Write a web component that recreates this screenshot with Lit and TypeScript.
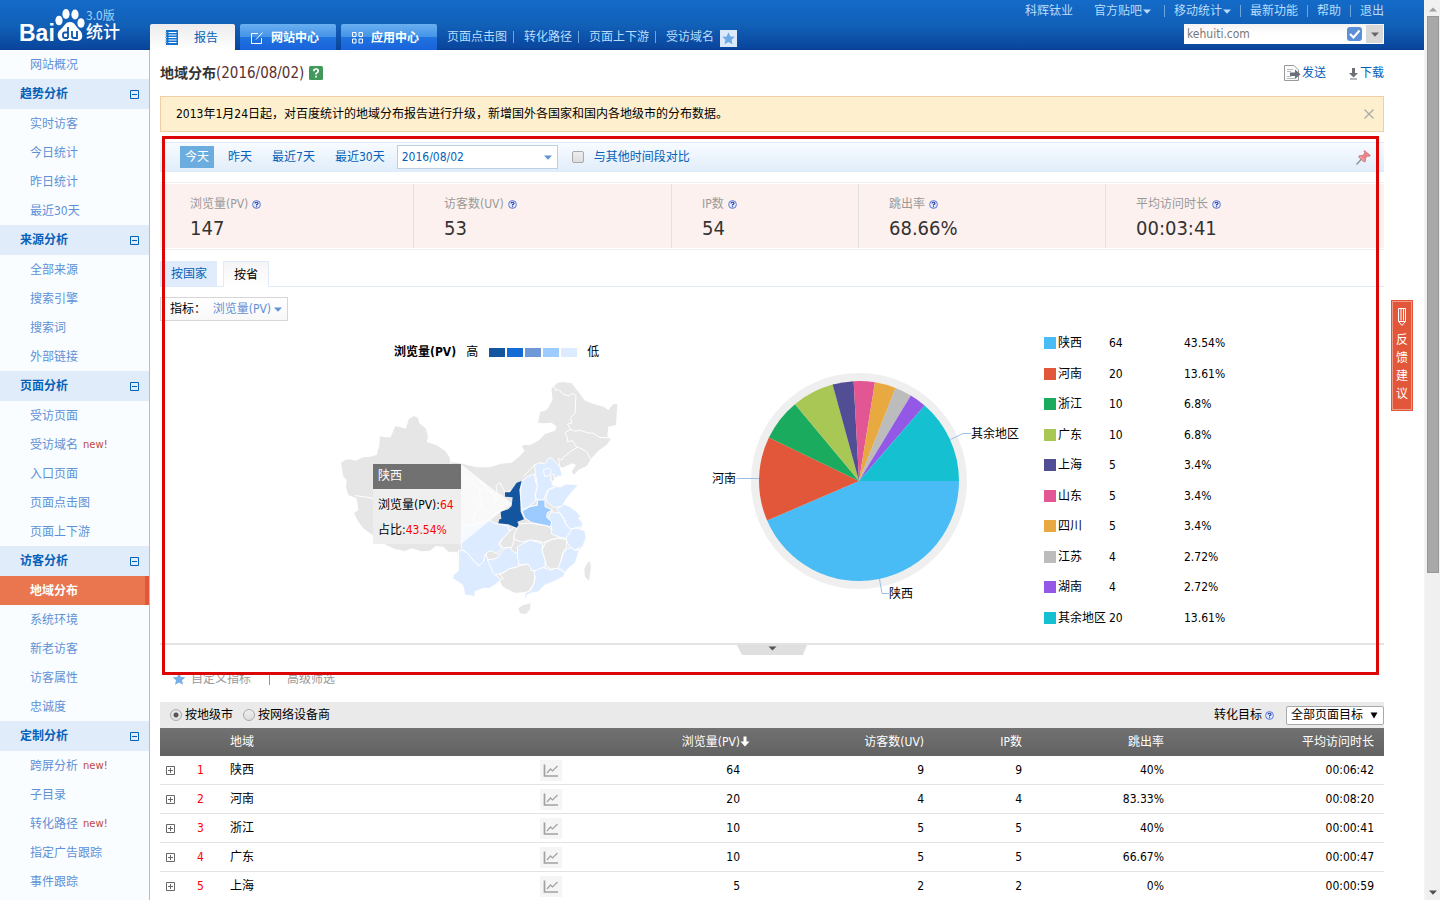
import { LitElement, html, svg, css } from "lit";
import { customElement, property } from "lit/decorators.js";

interface Group { title: string; items: { text: string; fresh?: boolean; active?: boolean }[]; }
interface Slice { name: string; value: number; share: string; color: string; }

const groups: Group[] = [
  { title: "趋势分析", items: [{ text: "实时访客" }, { text: "今日统计" }, { text: "昨日统计" }, { text: "最近30天" }] },
  { title: "来源分析", items: [{ text: "全部来源" }, { text: "搜索引擎" }, { text: "搜索词" }, { text: "外部链接" }] },
  { title: "页面分析", items: [{ text: "受访页面" }, { text: "受访域名", fresh: true }, { text: "入口页面" }, { text: "页面点击图" }, { text: "页面上下游" }] },
  { title: "访客分析", items: [{ text: "地域分布", active: true }, { text: "系统环境" }, { text: "新老访客" }, { text: "访客属性" }, { text: "忠诚度" }] },
  { title: "定制分析", items: [{ text: "跨屏分析", fresh: true }, { text: "子目录" }, { text: "转化路径", fresh: true }, { text: "指定广告跟踪" }, { text: "事件跟踪" }] },
];

const slices: Slice[] = [
  { name: "陕西", value: 64, share: "43.54%", color: "#49bcf5" },
  { name: "河南", value: 20, share: "13.61%", color: "#e25639" },
  { name: "浙江", value: 10, share: "6.8%", color: "#1bab5f" },
  { name: "广东", value: 10, share: "6.8%", color: "#a8c755" },
  { name: "上海", value: 5, share: "3.4%", color: "#524e95" },
  { name: "山东", value: 5, share: "3.4%", color: "#e35694" },
  { name: "四川", value: 5, share: "3.4%", color: "#e9a941" },
  { name: "江苏", value: 4, share: "2.72%", color: "#bcbcbc" },
  { name: "湖南", value: 4, share: "2.72%", color: "#9458e6" },
  { name: "其余地区", value: 20, share: "13.61%", color: "#15c1d1" },
];

const stats = [
  ["浏览量(PV)", "147"], ["访客数(UV)", "53"], ["IP数", "54"], ["跳出率", "68.66%"], ["平均访问时长", "00:03:41"],
];

const rows = [
  ["陕西", "64", "9", "9", "40%", "00:06:42"],
  ["河南", "20", "4", "4", "83.33%", "00:08:20"],
  ["浙江", "10", "5", "5", "40%", "00:00:41"],
  ["广东", "10", "5", "5", "66.67%", "00:00:47"],
  ["上海", "5", "2", "2", "0%", "00:00:59"],
];

const land = "33,398 45,390 60,388 75,392 100,382 120,380 140,375 148,345 150,318 165,322 182,322 196,288 212,292 228,296 236,268 252,258 264,264 268,280 288,296 294,320 290,336 320,346 345,362 358,380 362,398 375,397 400,402 440,412 480,412 510,402 545,398 570,378 584,362 576,350 580,344 600,346 628,330 645,312 675,302 680,290 665,278 640,280 624,278 630,247 650,240 668,210 664,178 672,168 684,158 700,156 725,160 745,185 765,212 790,222 820,230 835,240 850,222 862,222 858,285 835,290 832,318 842,328 830,345 805,362 785,385 770,408 745,420 732,434 725,425 738,405 728,400 715,405 700,412 690,412 697,437 680,440 672,450 665,462 672,468 695,470 705,462 745,464 722,490 708,508 700,522 720,530 740,545 752,560 745,565 756,575 758,590 748,597 765,603 768,625 758,650 748,660 742,680 735,700 715,715 705,728 700,740 670,755 645,765 625,785 600,790 585,788 555,790 530,778 515,768 508,755 495,765 480,775 460,775 435,785 435,800 420,797 405,795 398,765 368,745 370,735 385,722 386,690 382,665 355,665 340,650 318,648 300,662 275,664 245,655 225,663 195,657 168,645 140,625 100,595 85,575 72,550 85,540 80,505 55,495 48,470 50,450 40,440 36,418";

const pale = [
  "388,600 410,585 440,585 475,568 495,580 535,588 538,605 512,632 505,643 516,655 500,672 485,662 470,667 465,690 456,703 446,706 430,690 412,670 395,655",
  "386,660 400,662 415,672 430,692 446,708 460,696 466,672 475,690 484,706 488,725 512,750 480,775 460,775 435,785 435,800 420,797 405,795 398,765 368,745 370,735 385,722",
  "472,690 500,685 512,668 525,655 538,652 550,665 565,672 568,700 560,712 540,715 515,730 495,735 488,725 480,706",
  "563,650 580,640 600,630 622,636 638,642 636,662 645,690 645,712 628,722 605,722 595,702 568,705 562,680",
  "612,728 622,718 640,712 660,720 680,715 692,720 705,728 700,740 670,755 645,765 625,785 600,790 588,798 591,811 583,802 586,788 602,782 612,760 616,742",
  "712,655 728,652 735,662 748,658 742,680 735,700 715,715 705,728 685,712 692,695 700,670",
  "720,598 735,594 748,597 765,603 768,625 758,650 735,660 720,650 708,630 710,615",
  "665,545 690,550 702,570 712,590 725,598 708,625 690,622 665,612 665,590 652,568",
  "680,538 700,522 720,530 740,545 752,560 745,565 756,575 758,590 735,594 720,597 708,582 704,568 690,548",
  "655,480 680,470 695,470 705,462 745,464 722,490 708,508 695,530 670,532 650,515 648,500",
  "613,405 630,398 645,402 655,385 664,383 675,395 690,412 697,437 680,440 672,450 665,462 672,470 655,478 645,498 640,512 620,508 615,495 622,470 618,440",
  "575,455 592,440 612,432 616,450 622,470 615,495 618,510 600,528 576,540 574,520 570,500",
];
const grey = [
  "510,735 540,715 568,708 598,700 608,715 615,728 612,760 595,785 585,788 555,790 530,778 515,768 508,752 520,745",
  "645,640 660,630 690,624 710,630 710,650 698,668 692,695 685,715 665,718 650,710 645,690 636,662",
  "548,600 560,592 568,582 585,580 605,580 655,588 670,605 692,622 660,630 640,638 622,632 600,630 575,636 553,628",
  "510,640 520,622 538,605 550,592 562,594 552,615 552,632 545,652 518,654",
];
const borders = [
  "672,168 678,182 684,178 700,192 715,198 728,190 738,197 735,250 722,262 725,280 712,282 722,298",
  "722,298 735,304 750,300 770,308 790,310 808,322 842,324",
  "722,298 705,308 712,322 712,335 728,332 738,350 745,352 758,358 770,365 782,388",
  "742,352 725,362 700,382 696,390 685,385 690,412",
  "75,497 100,500 130,505 200,530 280,530 340,490 362,398",
  "390,430 410,440 430,462 450,478 448,500 456,525 440,545 430,560 435,580 450,576",
  "440,455 465,462 470,480 490,490 500,510 488,520 520,530",
  "575,455 545,480 525,488 520,478 510,458 498,468 502,490 520,500 545,522 512,545",
  "613,405 580,440",
  "480,565 500,548 512,545",
];

@customElement("help-dot")
export class HelpDot extends LitElement {
  static styles = css`:host { display: inline-flex; } svg { width: 9px; height: 9px; display: block; }`;
  render() {
    return html`<svg viewBox="0 0 9 9" aria-hidden="true"><circle cx="4.5" cy="4.5" r="3.9" fill="#e4ebfb" stroke="#5c79d8"/><path d="M3 3.6 Q3 2.2 4.5 2.2 Q6 2.2 6 3.5 Q6 4.2 4.5 4.8 V5.4 M4.5 6.2 V7.2" fill="none" stroke="#26399f" stroke-width="1.1"/></svg>`;
  }
}

@customElement("share-pie")
export class SharePie extends LitElement {
  @property({ attribute: false }) data: Slice[] = [];
  static styles = css`
    :host { display: block; }
    svg { display: block; width: 340px; height: 300px; }
    text { font: 12px "DejaVu Sans Condensed", "Noto Sans CJK SC", sans-serif; fill: #000; }
  `;
  render() {
    const total = this.data.reduce((sum, d) => sum + d.value, 0);
    const cx = 159, cy = 151, r = 100;
    let angle = 0;
    const wedges = this.data.map((d) => {
      const from = angle;
      angle += (d.value / total) * Math.PI * 2;
      const p = (a: number) => `${(cx + r * Math.cos(a)).toFixed(2)} ${(cy + r * Math.sin(a)).toFixed(2)}`;
      return svg`<path fill=${d.color} d=${`M${cx} ${cy} L${p(from)} A${r} ${r} 0 0 1 ${p(angle)} Z`}></path>`;
    });
    return html`<svg viewBox="0 0 340 300" role="img" aria-label="浏览量占比">
      <circle cx=${cx} cy=${cy} r="108" fill="#efefef"></circle>
      ${wedges}
      <g fill="none" stroke="#9cbfe6">
        <path d="M250.500 109.500 L263 103.500 H271"></path>
        <path d="M36.500 148.500 H59"></path>
        <path d="M179.500 249 L182 263.500 H189"></path>
      </g>
      <text x="271" y="108">其余地区</text>
      <text x="12" y="153">河南</text>
      <text x="189" y="268">陕西</text>
    </svg>`;
  }
}

@customElement("china-map")
export class ChinaMap extends LitElement {
  static styles = css`
    :host { display: block; position: relative; width: 320px; }
    .scale { display: flex; align-items: center; height: 20px; margin-top: 21px; padding-left: 64px; color: #000; }
    .scale b { margin-right: 10px; }
    .swatches { display: flex; gap: 2px; margin: 0 10px 0 11px; }
    .sw { width: 16px; height: 9px; }
    .c1 { background: #1455a0; } .c2 { background: #136bd6; } .c3 { background: #6e98d7; } .c4 { background: #9ecbff; } .c5 { background: #dcebff; }
    svg { display: block; width: 320px; height: 268px; }
    .tip { position: absolute; left: 43px; top: 143px; width: 88px; background: #eeeeee; color: #000; line-height: 25px; }
    .tip h4 { margin: 0; padding: 0 5px; font-weight: 400; font-size: 12px; color: #fff; background: #717171; }
    .tip p { margin: 0; padding: 0 5px; white-space: nowrap; }
    .tip div { padding: 4px 0 1px; }
    em { font-style: normal; color: #f00; }
  `;
  render() {
    return html`
      <div class="scale"><b>浏览量(PV)</b><span>高</span>
        <span class="swatches"><i class="sw c1"></i><i class="sw c2"></i><i class="sw c3"></i><i class="sw c4"></i><i class="sw c5"></i></span><span>低</span></div>
      <svg viewBox="0 96 960 804" role="img" aria-label="中国地图" stroke="#fff" stroke-width="3" stroke-linejoin="round">
        <polygon fill="#e6e6e6" stroke="none" points=${land}></polygon>
        ${borders.map((p) => svg`<polyline fill="none" points=${p}></polyline>`)}
        ${grey.map((p) => svg`<polygon fill="#e6e6e6" points=${p}></polygon>`)}
        ${pale.map((p) => svg`<polygon fill="#dcebff" points=${p}></polygon>`)}
        <polygon fill="#9ecbff" points="576,543 600,530 622,526 622,510 645,510 645,530 668,540 652,548 650,562 665,575 662,590 640,585 605,578 585,565"></polygon>
        <polygon fill="#dcebff" points="640,420 655,414 665,422 658,436 644,440"></polygon>
        <polygon fill="#e6e6e6" points="662,436 672,432 674,450 664,456"></polygon>
        <polygon fill="#1455a0" stroke="none" points="575,453 568,480 570,500 572,545 582,568 562,575 566,585 560,593 535,583 505,580 508,568 514,567 512,545 535,538 545,528 548,502 525,500 525,487 540,487 560,458"></polygon>
        <polygon fill="#e6e6e6" stroke="none" points="780,693 783,712 777,752 765,740 763,718 770,702"></polygon>
        <polygon fill="#e6e6e6" stroke="none" points="565,835 580,825 602,820 600,838 588,852 570,850"></polygon>
        <polygon fill="#fff" fill-opacity="0.75" stroke="none" points="393,402 543,521 393,642"></polygon>
      </svg>
      <div class="tip"><h4>陕西</h4><div><p>浏览量(PV):<em>64</em></p><p>占比:<em>43.54%</em></p></div></div>`;
  }
}

@customElement("app-root")
export class AppRoot extends LitElement {
  static styles = css`
    :host { display: block; height: 100vh; overflow: hidden; background: #fff; color: #000; font: 12px/20px "DejaVu Sans Condensed", "Noto Sans CJK SC", sans-serif; }
    * { box-sizing: border-box; }
    a { text-decoration: none; color: inherit; }
    button, select, input { font: inherit; color: inherit; margin: 0; }
    button { background: none; border: 0; padding: 0; cursor: pointer; }
    svg { display: block; flex: none; }
    .shell { display: flex; height: 100%; }
    .page { flex: 1; min-width: 0; display: flex; flex-direction: column; }
    .rail { width: 16px; background: #f0f0f0; display: flex; flex-direction: column; align-items: center; justify-content: space-between; padding: 7px 0 5px; border-left: 1px solid #f5f5f5; }
    .track { flex: 1; width: 12px; padding: 4px 0; }
    .thumb { height: 64%; background: #a8a8a9; border: 1px solid #989898; }

    header { height: 50px; flex: none; display: flex; background: linear-gradient(#146bc8, #1160b8 50%, #0a469d 96%, #083f93); color: #b9dcfb; }
    .logo { width: 150px; }
    .logo text { fill: #fff; }
    .tabs { display: flex; align-items: flex-end; gap: 5px; }
    .tab { height: 26px; width: 96px; padding: 1px 0 0 11px; display: flex; align-items: center; gap: 8px; font-weight: 700; color: #fff; border-radius: 2px 2px 0 0; background: linear-gradient(#6ab0f0, #4593e8 49%, #1f74de 50%, #1a62dc); white-space: nowrap; }
    .tab.on { width: 85px; padding-left: 15px; gap: 16px; background: linear-gradient(#ececee, #fff); color: #0561b8; font-weight: 400; }
    .quick { display: flex; align-items: flex-end; padding: 0 0 3px 10px; white-space: nowrap; }
    .quick a + a { border-left: 1px solid #6fa5dd; padding-left: 10px; }
    .quick a { line-height: 12px; margin: 0 6px 4px 0; }
    .quick .fav { display: block; }
    .account { flex: 1; display: flex; flex-direction: column; align-items: flex-end; padding-right: 40px; }
    .links { display: flex; height: 22px; align-items: center; white-space: nowrap; line-height: 12px; margin-bottom: 2px; }
    .links a { display: flex; align-items: center; gap: 1px; padding: 0 9px; border-left: 1px solid #6fa5dd; }
    .links a:nth-child(-n + 2) { border: 0; padding: 0 13px 0 8px; }
    .links a:last-child { padding-right: 0; }
    .site { width: 200px; height: 20px; display: flex; align-items: center; background: linear-gradient(#f3f3f3, #fff 50%); color: #777; padding: 0 1px 0 3px; text-align: left; }
    .site span { flex: 1; }
    .site .drop { width: 17px; height: 18px; margin-left: 4px; background: #d8d8d8; display: flex; align-items: center; justify-content: center; }

    .body { flex: 1; min-height: 0; display: flex; }
    nav.side { width: 150px; flex: none; background: #f9fdff; border-right: 1px solid #a4bfea; overflow: hidden; color: #5f91d6; }
    .side a { display: flex; align-items: center; height: 29px; padding-left: 30px; }
    .side a.on { background: #e9764e; border-right: 4px solid #e25639; color: #fff; font-weight: 700; }
    .side h3 { margin: 0; height: 30px; padding: 0 10px 0 20px; background: #e1ecfa; color: #0561b8; font-size: 12px; display: flex; align-items: center; justify-content: space-between; }
    .new { font-family: "DejaVu Sans", sans-serif; font-size: 10px; color: #c14740; margin-left: 5px; }

    main { flex: 1; min-width: 0; overflow: hidden; padding: 0 40px 0 10px; }
    .title { height: 46px; display: flex; align-items: center; }
    h1 { margin: 0 5px 0 0; font-size: 15px; font-weight: 400; color: #5b2f2f; flex: none; }
    h1 b { color: #333; font-size: 14px; }
    .actions { margin-left: auto; display: flex; gap: 22px; color: #0561b8; }
    .actions a { display: flex; align-items: center; gap: 1px; }
    .notice { height: 36px; border: 1px solid #f0cfa4; background: #fef0ce; display: flex; align-items: center; justify-content: space-between; padding: 0 9px 0 15px; margin-bottom: 10px; }

    .report { position: relative; }
    .frame { position: absolute; top: -6px; left: 2px; right: 5px; bottom: -20px; border: 3px solid #dd0606; pointer-events: none; z-index: 2; }
    .dates { height: 30px; display: flex; align-items: center; padding: 0 13px 0 20px; color: #0561b8; border: solid #dcebfa; border-width: 1px 0; background: linear-gradient(#f7fbff, #e1edfa); }
    .dates button { height: 22px; padding: 0 6px; margin-right: 8px; }
    .dates button.on { background: #6caddf; color: #fff; padding: 0 5px; }
    .dates .pick { width: 161px; height: 24px; margin: 0 14px 0 -2px; padding: 0 5px 0 4px; background: #fff; border: 1px solid #bccfe4; display: flex; align-items: center; justify-content: space-between; }
    .dates label { display: flex; align-items: center; gap: 10px; flex: 1; }
    .dates input { appearance: none; width: 12px; height: 12px; border: 1px solid #aaa; border-radius: 2px; background: linear-gradient(#eee, #ddd); }
    .stats { margin-top: 10px; border: solid #efefef; border-width: 1px 0; padding: 1px 0; display: grid; grid-template-columns: 254fr 258fr 187fr 247fr 278fr; }
    .stat { height: 64px; padding: 10px 0 0 30px; background: #fdf1ef; border-right: 1px solid #e2e2e2; color: #999; }
    .stat:last-child { border: 0; }
    .stat dt { display: flex; align-items: center; gap: 4px; }
    .stat dd { margin: 0; font-size: 20px; line-height: 28px; color: #333; }
    dl { margin: 0; }
    .kinds { margin-top: 11px; height: 26px; display: flex; gap: 6px; border-bottom: 1px solid #dfebfb; }
    .kinds button { height: 25px; padding: 0 10px 0 11px; background: #e0ecfb; color: #0561b8; }
    .kinds button.on { height: 26px; padding: 0 10px; background: linear-gradient(#f5f5f5, #fff); border: 1px solid #dfebfb; border-bottom: 0; color: #000; }
    .metric { margin-top: 10px; height: 24px; border: 1px solid #d6d6d6; width: 128px; padding: 0 5px 0 9px; background: linear-gradient(#fff, #f8f8f8); display: flex; align-items: center; justify-content: space-between; white-space: nowrap; }
    .metric button { color: #5f91d6; display: flex; align-items: center; gap: 3px; }
    .charts { display: flex; justify-content: center; height: 322px; padding-left: 12px; }
    share-pie { margin: 9px 4px 0 50px; }
    .legend { width: 182px; height: 295px; margin: 12px 0 0; padding: 0; list-style: none; display: flex; flex-direction: column; justify-content: space-between; }
    .legend li { display: grid; grid-template-columns: 14px 51px 75px 1fr; align-items: center; white-space: nowrap; }
    .legend i { width: 12px; height: 12px; }
    .divider { border-top: 2px solid #e3e3e3; height: 12px; display: flex; justify-content: center; }
    .divider button { width: 70px; height: 10px; }

    .extra { display: flex; align-items: center; height: 20px; margin: 14px 0 13px; padding-left: 12px; color: #999; line-height: 12px; }
    .extra svg { margin-right: 5px; }
    .extra a + a { border-left: 1px solid #a08fc0; margin-left: 18px; padding-left: 17px; }
    .filter { height: 26px; background: #eaeaea; display: flex; align-items: center; padding-left: 10px; }
    .filter label { display: flex; align-items: center; gap: 3px; margin-right: 10px; }
    .filter .goal label { margin: 0; }
    .filter input { appearance: none; width: 12px; height: 12px; border-radius: 50%; border: 1px solid #aaa; background: linear-gradient(#eee, #ddd); }
    .filter input:checked { background: radial-gradient(circle, #555 0 2px, #e6e6e6 3px); }
    .goal { margin-left: auto; display: flex; align-items: center; gap: 3px; }
    .goal help-dot { margin-right: 9px; }
    .goal .box { position: relative; display: flex; }
    .goal select { appearance: none; width: 98px; height: 19px; line-height: 16px; padding: 0 4px; background: #fff; border: 1px solid #a9a9a9; border-radius: 2px; color: #000; }
    .goal .box svg { position: absolute; right: 6px; top: 6px; pointer-events: none; }
    table { width: 100%; table-layout: fixed; border-collapse: separate; border-spacing: 0; }
    th { height: 28px; padding: 0 10px 0 0; font-weight: 400; color: #fff; text-align: right; white-space: nowrap; }
    thead { background: linear-gradient(#717171, #626262); }
    th.name, td.name { text-align: left; padding-left: 10px; }
    th.sorted { padding: 0; }
    th.sorted span { display: inline-flex; align-items: center; }
    td { height: 29px; padding: 0 10px 0 0; text-align: right; border-bottom: 1px solid #e3e3e3; }
    td.mid { padding: 0; text-align: center; }
    td.mid button { display: block; margin: 0 auto; }
    td.rank { color: #f00; padding: 0; text-align: center; }
    .w21 { width: 21px; } .w39 { width: 39px; } .w40 { width: 40px; } .w179 { width: 179px; } .w184 { width: 184px; } .w98 { width: 98px; } .w142 { width: 142px; } .w210 { width: 210px; }

    .feedback { position: absolute; right: 27px; top: 300px; width: 22px; height: 111px; border: 1px solid #e25639; background: #e25639; color: #fff; outline: 1px solid #f19c89; outline-offset: -2px; display: flex; flex-direction: column; align-items: center; padding-top: 6px; line-height: 18px; z-index: 3; }
    .feedback span { width: 12px; margin-top: 4px; white-space: normal; }
  `;

  private caret(color: string) {
    return html`<svg width="8" height="5" viewBox="0 0 8 5"><path d="M0 0.500H8L4 4.800Z" fill=${color}/></svg>`;
  }

  private star(color: string) {
    return svg`<path d="M7 0.800 L8.900 4.900 L13.400 5.300 L10 8.300 L11 12.800 L7 10.400 L3 12.800 L4 8.300 L0.600 5.300 L5.100 4.900Z" fill=${color}></path>`;
  }

  private headerBar() {
    return html`<header>
      <svg class="logo" width="150" height="50" viewBox="0 0 150 50" role="img" aria-label="Baidu 统计 3.0版">
        <text x="19" y="41" font-family="Liberation Sans" font-weight="700" font-size="23">Bai</text>
        <g fill="#fff"><ellipse cx="66" cy="14" rx="3.600" ry="5"/><ellipse cx="75" cy="14.500" rx="3.600" ry="5"/><ellipse cx="59" cy="20.500" rx="3.600" ry="4.800"/><ellipse cx="81" cy="23" rx="3.600" ry="4.800"/>
          <path d="M70 22 C65 22 64 27 60 30 C56 33 57 41 63 41 C67 41 67 40 70 40 C73 40 74 41.500 78 41 C84 40 83 33 79.500 30 C76 27 75 22 70 22Z"/></g>
        <path d="M68 27v11M68 32.500h-3q-2 0-2 2v1.500q0 2 2 2h3M72 31v5q0 2 2 2h3v-7" fill="none" stroke="#0d55ad" stroke-width="1.800"/>
        <text x="86" y="20" font-family="Noto Sans CJK SC" font-size="12" style="fill:#a6d2fa">3.0版</text>
        <text x="86" y="38" font-family="Noto Sans CJK SC" font-weight="500" font-size="17">统计</text>
      </svg>
      <nav class="tabs">
        <a class="tab on" href="#"><svg width="13" height="15" viewBox="0 0 13 15"><path d="M1 0h12v15H1z" fill="#1173cf"/><path d="M3.500 2.500h8M3.500 5h8M3.500 7.500h8M3.500 10h8M3.500 12.500h8" stroke="#fff"/><path d="M0 2.500h2M0 5h2M0 7.500h2M0 10h2M0 12.500h2" stroke="#8fbde8"/></svg>报告</a>
        <a class="tab" href="#"><svg width="12" height="12" viewBox="0 0 12 12" fill="none" stroke="#fff"><path d="M7 1.500H0.500V11.500H10.500V6M5 7.500L11.500 0.500"/></svg>网站中心</a>
        <a class="tab" href="#"><svg width="11" height="12" viewBox="0 0 11 12" fill="none" stroke="#fff"><path d="M0.500 0.500h3.500v4H0.500zM7 0.500h3.500v4H7zM0.500 7h3.500v4H0.500zM7 7h3.500v4H7z"/></svg>应用中心</a>
      </nav>
      <nav class="quick">
        <a href="#">页面点击图</a><a href="#">转化路径</a><a href="#">页面上下游</a><a href="#">受访域名</a>
        <button class="fav" aria-label="收藏"><svg width="17" height="17" viewBox="-1.500 -1.500 17 17"><rect x="-1.500" y="-1.500" width="17" height="17" fill="#dce9fb"/>${this.star("#6fa9e6")}</svg></button>
      </nav>
      <div class="account">
        <nav class="links"><a href="#">科辉钛业</a><a href="#">官方贴吧${this.caret("#b9dcfb")}</a><a href="#">移动统计${this.caret("#b9dcfb")}</a><a href="#">最新功能</a><a href="#">帮助</a><a href="#">退出</a></nav>
        <button class="site" aria-haspopup="listbox"><span>kehuiti.com</span>
          <svg width="15" height="14" viewBox="0 0 15 14"><rect width="15" height="14" rx="3" fill="#5b8fd8"/><path d="M3 7l3.500 3.500L12.500 3.500" fill="none" stroke="#fff" stroke-width="2.200"/></svg>
          <i class="drop">${this.caret("#666")}</i></button>
      </div>
    </header>`;
  }

  private sidebar() {
    return html`<nav class="side"><a href="#">网站概况</a>
      ${groups.map((g) => html`<h3>${g.title}<svg width="9" height="9" viewBox="0 0 9 9" fill="none" stroke="#0561b8"><path d="M0.500 0.500h8v8h-8zM2 4.500h5"/></svg></h3>
        ${g.items.map((i) => html`<a href="#" class=${i.active ? "on" : ""}>${i.text}${i.fresh ? html`<span class="new">new!</span>` : ""}</a>`)}`)}
    </nav>`;
  }

  private report() {
    return html`<section class="report">
      <div class="dates"><button class="on">今天</button><button>昨天</button><button>最近7天</button><button>最近30天</button>
        <button class="pick" aria-haspopup="dialog">2016/08/02 ${this.caret("#5f91d6")}</button>
        <label><input type="checkbox">与其他时间段对比</label>
        <svg width="15" height="15" viewBox="0 0 15 15"><path d="M0.500 14.500L6 8.500" stroke="#8d949c" stroke-width="1.500"/><path d="M8.500 0.500L14.500 5.500L13 6.500L11.500 6L9.500 8.500L9.500 11.500L8 12L2.500 7L3.500 5.500L6.500 5.500L8.800 3L8 1.500Z" fill="#e9858a" stroke="#c96a72" stroke-width="0.600"/><path d="M4 6.500L8.500 10.500" stroke="#f6bcbc"/></svg>
      </div>
      <div class="stats">${stats.map(([k, v]) => html`<dl class="stat"><dt>${k}<help-dot></help-dot></dt><dd>${v}</dd></dl>`)}</div>
      <div class="kinds"><button>按国家</button><button class="on">按省</button></div>
      <div class="metric"><span>指标：</span><button aria-haspopup="listbox">浏览量(PV)${this.caret("#5f91d6")}</button></div>
      <div class="charts"><china-map></china-map><share-pie .data=${slices}></share-pie>
        <ul class="legend">${slices.map((s) => html`<li><i style="background:${s.color}"></i><span>${s.name}</span><span>${s.value}</span><span>${s.share}</span></li>`)}</ul>
      </div>
      <div class="divider"><button aria-label="展开"><svg width="70" height="10" viewBox="0 0 70 10"><path d="M0 0H70L66 10H5Z" fill="#dfdfdf"/><path d="M31.500 1.500H39.500L35.500 5.500Z" fill="#555"/></svg></button></div>
      <div class="frame"></div>
    </section>`;
  }

  private details() {
    return html`
      <div class="extra"><svg width="14" height="14" viewBox="0 0 14 14">${this.star("#78aee8")}</svg><a href="#">自定义指标</a><a href="#">高级筛选</a></div>
      <div class="filter">
        <label><input type="radio" name="by" checked>按地级市</label><label><input type="radio" name="by">按网络设备商</label>
        <div class="goal"><label for="goal">转化目标</label><help-dot></help-dot>
          <span class="box"><select id="goal"><option>全部页面目标</option></select><svg width="8" height="7" viewBox="0 0 8 7"><path d="M0.500 0.500H7.500L4 6.500Z" fill="#000"/></svg></span></div>
      </div>
      <table>
        <colgroup><col class="w21"><col class="w39"><col><col class="w40"><col class="w179"><col class="w184"><col class="w98"><col class="w142"><col class="w210"></colgroup>
        <thead><tr><th></th><th></th><th class="name">地域</th><th></th><th class="sorted"><span>浏览量(PV)<svg width="10" height="12" viewBox="0 0 10 12"><path d="M3.500 0.500h3v5h3L5 10.500L0.500 5.500h3z" fill="#fff"/></svg></span></th><th>访客数(UV)</th><th>IP数</th><th>跳出率</th><th>平均访问时长</th></tr></thead>
        <tbody>${rows.map((r, i) => html`<tr>
          <td class="mid"><button aria-label="展开"><svg width="9" height="9" viewBox="0 0 9 9" fill="none" stroke="#666"><path d="M0.500 0.500h8v8h-8zM2 4.500h5M4.500 2v5"/></svg></button></td>
          <td class="rank">${i + 1}</td><td class="name">${r[0]}</td>
          <td class="mid"><button aria-label="趋势"><svg width="22" height="21" viewBox="0 0 22 21" fill="none"><rect width="22" height="21" fill="#f5f5f5"/><path d="M4.500 4.500v11.500h13.500" stroke="#a3a1a1" stroke-width="1.700"/><path d="M7 13L10.500 9L12.500 11L17.500 6" stroke="#a3a1a1" stroke-width="1.200"/></svg></button></td>
          ${r.slice(1).map((v) => html`<td>${v}</td>`)}</tr>`)}</tbody>
      </table>`;
  }

  render() {
    return html`<div class="shell">
      <div class="page">
        ${this.headerBar()}
        <div class="body">
          ${this.sidebar()}
          <main>
            <div class="title"><h1><b>地域分布</b>(2016/08/02)</h1>
              <svg width="14" height="14" viewBox="0 0 14 14"><rect width="14" height="14" rx="1.500" fill="#43995c"/><path d="M4.800 5.200Q4.800 3 7 3T9.200 5Q9.200 6.500 7 7.500V8.600M7 9.800V11.400" fill="none" stroke="#fff" stroke-width="1.700"/></svg>
              <div class="actions">
                <a href="#"><svg width="17" height="16" viewBox="0 0 17 16"><path d="M0.500 0.500H10L14.500 5V15.500H0.500Z" fill="#fafafa" stroke="#999"/><path d="M3 4.500h6M3 6.500h4M3 11.500h4M3 13.500h8" stroke="#bbb"/><path d="M6 7.500h5V4.500l5.500 4.700L11 14v-3H6z" fill="#6b7078"/></svg>发送</a>
                <a href="#"><svg width="11" height="13" viewBox="0 0 11 13"><path d="M4 1h3v5h3L5.500 10.500L1 6h3zM2 11.500h7v1H2z" fill="#6b7078"/></svg>下载</a>
              </div>
            </div>
            <div class="notice"><span>2013年1月24日起，对百度统计的地域分布报告进行升级，新增国外各国家和国内各地级市的分布数据。</span>
              <button aria-label="关闭"><svg width="10" height="10" viewBox="0 0 10 10"><path d="M0.500 0.500L9.500 9.500M9.500 0.500L0.500 9.500" stroke="#aaa" stroke-width="1.300"/></svg></button></div>
            ${this.report()}
            ${this.details()}
          </main>
        </div>
      </div>
      <button class="feedback"><svg width="10" height="20" viewBox="0 0 10 20" fill="none" stroke="#fff"><path d="M1.500 1.500h7v13h-7zM4 1.500v12M6.500 1.500v12M2 15L5 18.500L8 15"/></svg><span>反馈建议</span></button>
      <div class="rail"><svg width="8" height="5" viewBox="0 0 8 5"><path d="M0 4.500H8L4 0.500Z" fill="#a0a0a0"/></svg><div class="track"><div class="thumb"></div></div>${this.caret("#505050")}</div>
    </div>`;
  }
}
